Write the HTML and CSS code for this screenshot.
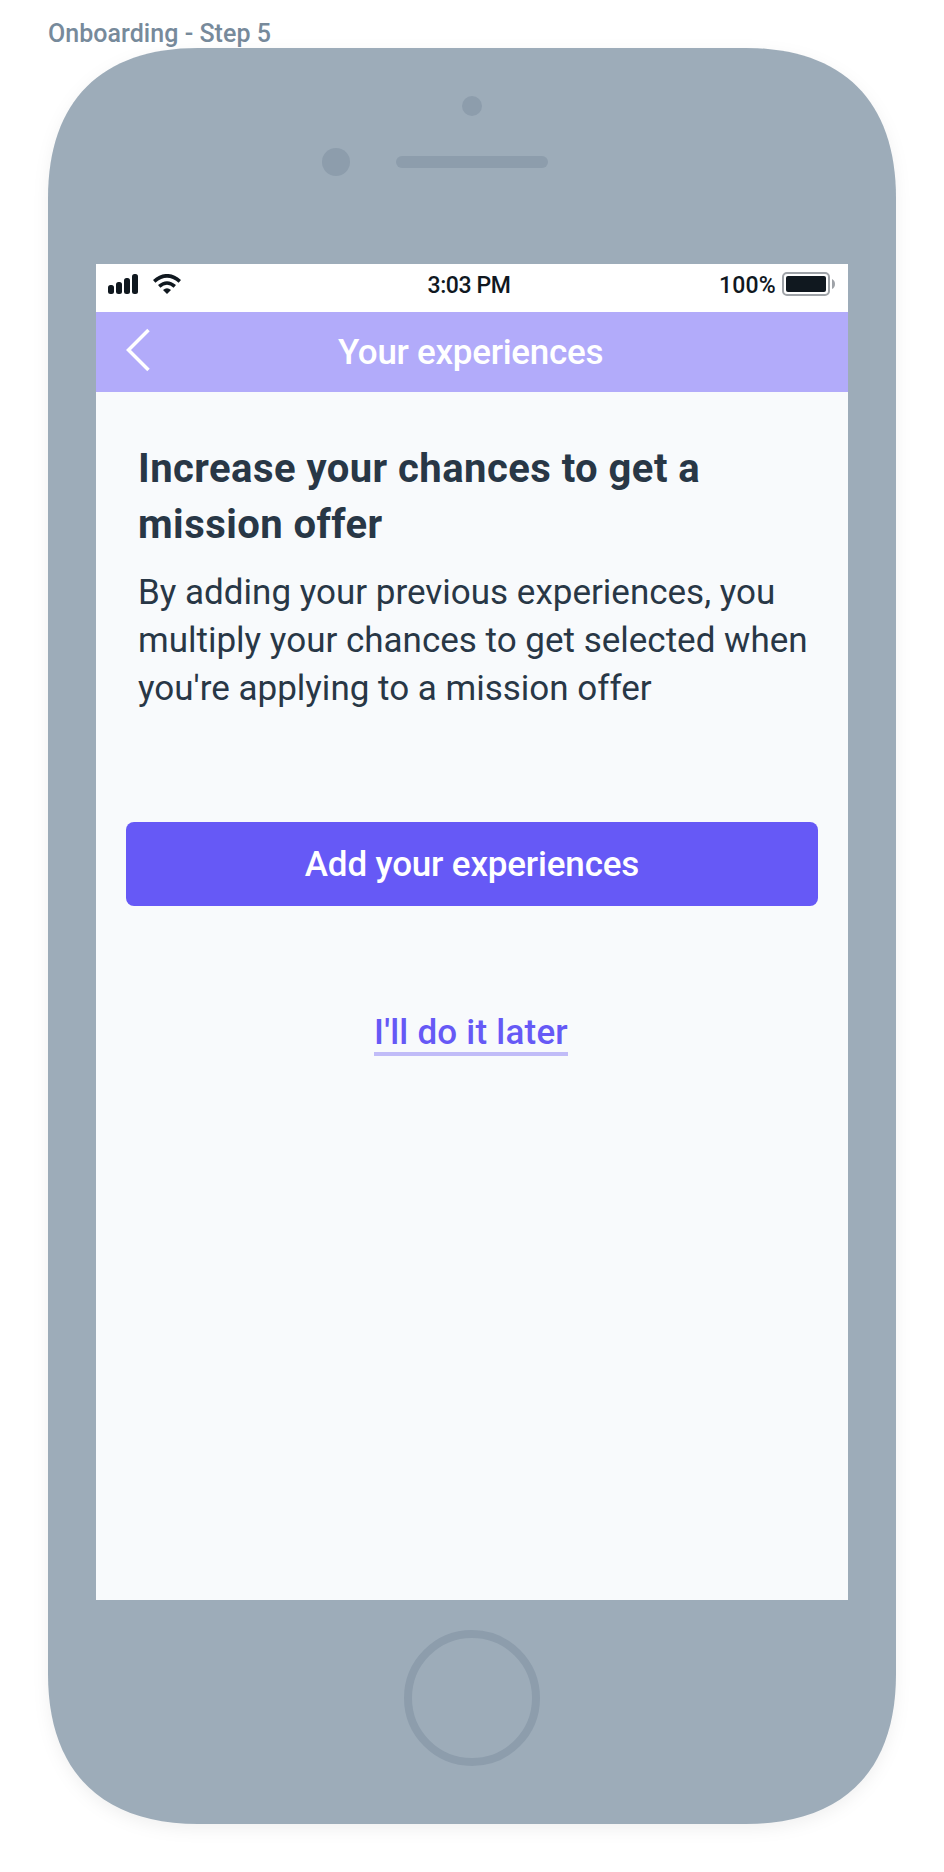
FILE: index.html
```html
<!DOCTYPE html>
<html lang="en">
<head>
    <meta charset="UTF-8">
    <meta name="viewport" content="width=device-width, initial-scale=1.0">
    <title>Onboarding - Step 5</title>
    <link rel="stylesheet" href="styles.css">
</head>
<body>
    <div class="frame-title">Onboarding - Step 5</div>

    <div class="device">
        <svg class="device-body" viewBox="0 0 848 1776">
            <path d="M0 150C0 53 53 0 150 0H698C795 0 848 53 848 150V1626C848 1723 795 1776 698 1776H150C53 1776 0 1723 0 1626Z"/>
        </svg>

        <div class="camera"></div>
        <div class="earpiece">
            <div class="sensor"></div>
            <div class="speaker"></div>
        </div>

        <div class="screen">
            <div class="status-bar">
                <div class="status-left">
                    <svg width="30" height="20" viewBox="0 0 30 20">
                        <rect x="0" y="11" width="6" height="9" rx="2.5"/>
                        <rect x="8" y="8" width="6" height="12" rx="2.5"/>
                        <rect x="16" y="4" width="6" height="16" rx="2.5"/>
                        <rect x="24" y="0" width="6" height="20" rx="2.5"/>
                    </svg>
                    <svg width="28" height="20" viewBox="0 0 28 20">
                        <path class="wave" d="M1.2 7.4Q14 -3.8 26.8 7.4"/>
                        <path class="wave" d="M6.2 12.4Q14 5.6 21.8 12.4"/>
                        <path d="M10 15.9Q14 12.8 18 15.9L14 20Z"/>
                    </svg>
                </div>
                <div class="time">3:03 PM</div>
                <div class="status-right">
                    <span>100%</span>
                    <svg width="53" height="24" viewBox="0 0 53 24">
                        <rect class="battery-case" x="1" y="1" width="46" height="22" rx="4"/>
                        <rect x="4" y="4" width="40" height="16" rx="2"/>
                        <path class="battery-tip" d="M50 7Q53 8.500 53 12T50 17Z"/>
                    </svg>
                </div>
            </div>

            <div class="nav-bar">
                <svg class="back" width="26" height="46" viewBox="0 0 26 46">
                    <path d="M23.500 3L3.500 23L23.500 43"/>
                </svg>
                <div class="nav-title">Your experiences</div>
            </div>

            <div class="content">
                <h1>Increase your chances to get a<br>mission offer</h1>
                <p>By adding your previous experiences, you<br>multiply your chances to get selected when<br>you're applying to a mission offer</p>
            </div>

            <div class="actions">
                <button class="btn">Add your experiences</button>
                <a class="link">I'll do it later</a>
            </div>
        </div>

        <div class="home"></div>
    </div>
</body>
</html>
```

FILE: styles.css
```css
* {
    box-sizing: border-box;
}
body {
    font-family: Roboto, 'Liberation Sans', sans-serif;
    margin: 0;
    padding: 19px 48px 48px;
    background: white;
}
svg {
    display: block;
}
.frame-title {
    font-size: 25px;
    font-weight: 500;
    line-height: 29px;
    letter-spacing: 0.04px;
    color: #778a9b;
}
.device {
    position: relative;
    z-index: 0;
    display: flex;
    flex-direction: column;
    align-items: center;
    width: 848px;
    height: 1776px;
    padding-top: 48px;
}
.device-body {
    position: absolute;
    top: 0;
    left: 0;
    z-index: -1;
    width: 848px;
    height: 1776px;
    overflow: visible;
    fill: #9dacb9;
    filter: drop-shadow(0 5px 8px rgba(0,0,0,0.06));
}
.camera {
    width: 20px;
    height: 20px;
    border-radius: 50%;
    background: #8d9dac;
}
.earpiece {
    display: flex;
    align-items: center;
    gap: 46px;
    margin: 32px 74px 88px 0;
}
.sensor {
    width: 28px;
    height: 28px;
    border-radius: 50%;
    background: #8d9dac;
}
.speaker {
    width: 152px;
    height: 12px;
    border-radius: 6px;
    background: #8d9dac;
}
.screen {
    width: 752px;
    height: 1336px;
    background: #f8fafc;
}
.status-bar {
    display: grid;
    grid-template-columns: 1fr auto 1fr;
    align-items: center;
    height: 48px;
    padding: 0 13px 6px 12px;
    background: white;
    color: #10181f;
    fill: #10181f;
    font-size: 23px;
    font-weight: 500;
}
.status-left {
    display: flex;
    gap: 15px;
    padding-bottom: 2px;
}
.status-right {
    display: flex;
    align-items: center;
    justify-content: flex-end;
    gap: 6px;
    letter-spacing: 0.2px;
}
.status-right svg {
    margin-top: -2px;
}
.time {
    letter-spacing: -0.4px;
    padding-right: 5px;
}
.wave {
    fill: none;
    stroke: #10181f;
    stroke-width: 3.6px;
}
.battery-case {
    fill: none;
    stroke: #9fa3a8;
    stroke-width: 2px;
}
.battery-tip {
    fill: #9fa3a8;
}
.nav-bar {
    display: grid;
    grid-template-columns: 1fr auto 1fr;
    align-items: center;
    height: 80px;
    padding: 0 31px 0 28px;
    background: #b2abfa;
    color: white;
}
.back {
    margin: -5px 0 0 1px;
    fill: none;
    stroke: white;
    stroke-width: 3.5px;
}
.nav-title {
    font-size: 35px;
    font-weight: 500;
    letter-spacing: -0.3px;
}
.content {
    padding: 49px 0 0 42px;
    color: #283746;
    white-space: nowrap;
}
h1 {
    margin: 0 0 16px;
    font-size: 40px;
    font-weight: 700;
    line-height: 56px;
    letter-spacing: 0.45px;
}
p {
    margin: 0;
    font-size: 35px;
    line-height: 48px;
}
.actions {
    display: flex;
    flex-direction: column;
    align-items: center;
    padding: 109px 30px 0;
}
.btn {
    width: 100%;
    height: 84px;
    margin-bottom: 107px;
    padding: 0;
    border: none;
    border-radius: 8px;
    background: #6659f6;
    color: white;
    font-family: inherit;
    font-size: 35px;
    font-weight: 500;
    letter-spacing: -0.18px;
}
.link {
    height: 43px;
    margin-right: 2px;
    border-bottom: 4px solid #c1bcf8;
    color: #6659f6;
    font-size: 35px;
    font-weight: 500;
    line-height: 40px;
    letter-spacing: 0.22px;
}
.home {
    width: 136px;
    height: 136px;
    margin-top: 30px;
    border: 8px solid #8d9dac;
    border-radius: 50%;
}
```
